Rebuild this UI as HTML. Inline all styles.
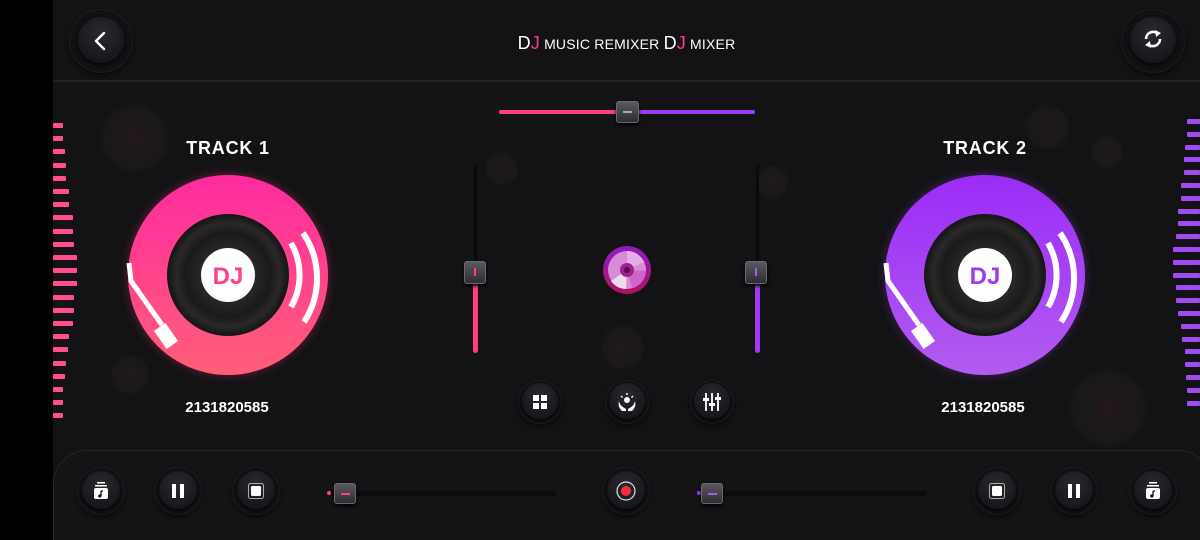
<!DOCTYPE html>
<html style="width:1200px;height:540px;overflow:hidden"><head><meta charset="utf-8"><style>
*{margin:0;padding:0;box-sizing:border-box}
body{width:1200px;height:540px;overflow:hidden;background:#131214;font-family:"Liberation Sans",sans-serif;position:relative}
.abs{position:absolute}
.strip{left:0;top:0;width:53px;height:540px;background:#000}
.hline{left:53px;top:80px;width:1147px;height:2px;background:#242326}
.panel{left:53px;top:450px;width:1160px;height:90px;border-top:1.5px solid #262528;border-left:1.5px solid #262528;border-right:1.5px solid #262528;border-radius:34px 34px 0 0;background:#141315}
.btn{border-radius:50%;background:#111012;box-shadow:0 0 0 1px #1d1c1f, 0 3px 6px rgba(0,0,0,.6)}
.btn .in{position:absolute;border-radius:50%;background:radial-gradient(circle at 50% 35%,#2a292d,#17161a 75%);box-shadow:0 2px 3px rgba(0,0,0,.7)}
.title{left:0;width:1253px;top:33px;text-align:center;color:#fff;font-size:14px;letter-spacing:.2px}
.title b{font-weight:normal;font-size:18px}
.title i{font-style:normal;color:#ff3d8f;font-size:18px}
.lbl{color:#fff;font-size:18px;font-weight:bold;letter-spacing:.8px;text-align:center;width:200px}
.num{color:#fff;font-size:15px;font-weight:bold;text-align:center;width:200px}
.bar{height:5px;border-radius:1px}
.knob{border-radius:3px;background:linear-gradient(#5a595e,#2e2d31);border:1px solid #6a696d;box-shadow:0 2px 3px #000}
.ghost{border-radius:50%;background:radial-gradient(circle,#2a1a20 8%,#211c20 25%,#1e1b1e 60%,rgba(30,25,28,0) 72%);opacity:.7}
</style></head><body>
<div class="abs strip"></div>
<div class="abs hline"></div>

<div class="abs ghost" style="left:100px;top:103px;width:70px;height:70px"></div>
<div class="abs ghost" style="left:110px;top:355px;width:40px;height:40px"></div>
<div class="abs ghost" style="left:485px;top:152px;width:34px;height:34px"></div>
<div class="abs ghost" style="left:600px;top:325px;width:45px;height:45px"></div>
<div class="abs ghost" style="left:755px;top:165px;width:34px;height:34px"></div>
<div class="abs ghost" style="left:1025px;top:105px;width:45px;height:45px"></div>
<div class="abs ghost" style="left:1090px;top:135px;width:34px;height:34px"></div>
<div class="abs ghost" style="left:1068px;top:368px;width:80px;height:80px"></div>

<div class="abs btn" style="left:70px;top:10px;width:62px;height:62px"><div class="in" style="left:8px;top:7px;width:46px;height:46px"></div>
<svg class="abs" style="left:20px;top:20px" width="22" height="22" viewBox="0 0 22 22"><path d="M14 3 L6 11 L14 19" fill="none" stroke="#fff" stroke-width="2.4" stroke-linecap="round" stroke-linejoin="round"/></svg></div>
<div class="abs btn" style="left:1122px;top:10px;width:62px;height:62px"><div class="in" style="left:8px;top:7px;width:46px;height:46px"></div>
<svg class="abs" style="left:19px;top:17px" width="24" height="24" viewBox="0 0 24 24"><path d="M5 12 A7 7 0 0 1 17 7" fill="none" stroke="#fff" stroke-width="2.6"/><path d="M19 12 A7 7 0 0 1 7 17" fill="none" stroke="#fff" stroke-width="2.6"/><path d="M14 3 L20 6 L15 10Z M10 21 L4 18 L9 14Z" fill="#fff"/></svg></div>

<div class="abs title"><b>D</b><i>J</i> MUSIC REMIXER <b>D</b><i>J</i> MIXER</div>

<div id="lb"></div>

<div class="abs lbl" style="left:128px;top:138px">TRACK 1</div>
<div class="abs lbl" style="left:885px;top:138px">TRACK 2</div>
<div class="abs num" style="left:127px;top:399px">2131820585</div>
<div class="abs num" style="left:883px;top:399px">2131820585</div>

<svg class="abs" style="left:108px;top:155px" width="240" height="240" viewBox="-20 -20 240 240">
<defs><linearGradient id="gp" x1="0" y1="0" x2="0" y2="1"><stop offset="0" stop-color="#ff2aa0"/><stop offset="1" stop-color="#ff5e78"/></linearGradient>
<radialGradient id="vn"><stop offset=".4" stop-color="#2a2829"/><stop offset=".7" stop-color="#1b1a1b"/><stop offset=".85" stop-color="#2a2829"/><stop offset="1" stop-color="#151414"/></radialGradient>
<filter id="gl" x="-30%" y="-30%" width="160%" height="160%"><feGaussianBlur stdDeviation="5"/></filter></defs>
<circle cx="100" cy="100" r="100" fill="#ff3b8a" opacity=".35" filter="url(#gl)"/>
<circle cx="100" cy="100" r="100" fill="url(#gp)"/>
<circle cx="100" cy="100" r="61" fill="url(#vn)"/>
<circle cx="100" cy="100" r="27" fill="#fff"/>
<text x="100" y="109" text-anchor="middle" font-family="Liberation Sans" font-weight="bold" font-size="24" fill="#ff3d8f">DJ</text>
<path d="M163 68 A64 64 0 0 1 163 132" fill="none" stroke="#fff" stroke-width="6"/>
<path d="M175 58 A80 80 0 0 1 176 147" fill="none" stroke="#fff" stroke-width="6"/>
<path d="M1 88 L3 106 L34 150" fill="none" stroke="#fff" stroke-width="5"/>
<rect x="31" y="150" width="14" height="22" fill="#fff" transform="rotate(-35 38 161)"/>
</svg>
<svg class="abs" style="left:865px;top:155px" width="240" height="240" viewBox="-20 -20 240 240">
<defs><linearGradient id="gq" x1="0" y1="0" x2="0" y2="1"><stop offset="0" stop-color="#9b2cf6"/><stop offset="1" stop-color="#b25cf2"/></linearGradient></defs>
<circle cx="100" cy="100" r="100" fill="#9b3cf0" opacity=".35" filter="url(#gl)"/>
<circle cx="100" cy="100" r="100" fill="url(#gq)"/>
<circle cx="100" cy="100" r="61" fill="url(#vn)"/>
<circle cx="100" cy="100" r="27" fill="#fff"/>
<text x="100" y="109" text-anchor="middle" font-family="Liberation Sans" font-weight="bold" font-size="24" fill="#9b3cf0">DJ</text>
<path d="M163 68 A64 64 0 0 1 163 132" fill="none" stroke="#fff" stroke-width="6"/>
<path d="M175 58 A80 80 0 0 1 176 147" fill="none" stroke="#fff" stroke-width="6"/>
<path d="M1 88 L3 106 L34 150" fill="none" stroke="#fff" stroke-width="5"/>
<rect x="31" y="150" width="14" height="22" fill="#fff" transform="rotate(-35 38 161)"/>
</svg>

<div class="abs" style="left:499px;top:110px;width:128px;height:4px;border-radius:2px;background:#ff3f82"></div>
<div class="abs" style="left:627px;top:110px;width:128px;height:4px;border-radius:2px;background:#9b3cf0"></div>
<div class="abs knob" style="left:616px;top:101px;width:23px;height:22px"><div class="abs" style="left:6px;top:9px;width:9px;height:2px;background:#aaa"></div></div>

<div class="abs" style="left:474px;top:165px;width:3px;height:110px;background:#0a0a0b"></div>
<div class="abs" style="left:473px;top:275px;width:5px;height:78px;border-radius:3px;background:#ff3f82"></div>
<div class="abs knob" style="left:464px;top:261px;width:22px;height:23px"><div class="abs" style="left:9px;top:6px;width:2px;height:8px;background:#ff3f82"></div></div>
<div class="abs" style="left:756px;top:165px;width:3px;height:110px;background:#0a0a0b"></div>
<div class="abs" style="left:755px;top:275px;width:5px;height:78px;border-radius:3px;background:#9b3cf0"></div>
<div class="abs knob" style="left:745px;top:261px;width:22px;height:23px"><div class="abs" style="left:9px;top:6px;width:2px;height:8px;background:#a35cf0"></div></div>

<svg class="abs" style="left:602px;top:245px" width="50" height="50" viewBox="0 0 50 50">
<defs><linearGradient id="cr" x1="0" y1="0" x2="0" y2="1"><stop offset="0" stop-color="#8a1fc4"/><stop offset="1" stop-color="#b0125e"/></linearGradient></defs>
<circle cx="25" cy="25" r="24" fill="url(#cr)"/>
<circle cx="25" cy="25" r="19" fill="#d98ad9"/>
<path d="M25 25 L25 6 A19 19 0 0 1 42 17Z" fill="#e6aee6"/>
<path d="M25 25 L9 36 A19 19 0 0 0 24 44Z" fill="#eadde8"/>
<path d="M25 25 L44 26 A19 19 0 0 1 30 43Z" fill="#cc66c8"/>
<circle cx="25" cy="25" r="7" fill="#a0208f"/>
<circle cx="25" cy="25" r="3" fill="#5a0a50"/>
</svg>

<div class="abs btn" style="left:519px;top:381px;width:42px;height:42px"><div class="in" style="left:3px;top:2px;width:36px;height:36px"></div>
<svg class="abs" style="left:13px;top:13px" width="16" height="16"><rect x="1" y="1" width="6" height="6" fill="#fff"/><rect x="9" y="1" width="6" height="6" fill="#fff"/><rect x="1" y="9" width="6" height="6" fill="#fff"/><rect x="9" y="9" width="6" height="6" fill="#fff"/></svg></div>
<div class="abs btn" style="left:606px;top:381px;width:42px;height:42px"><div class="in" style="left:3px;top:2px;width:36px;height:36px"></div>
<svg class="abs" style="left:11px;top:11px" width="20" height="20" viewBox="0 0 20 20"><circle cx="10" cy="8" r="3" fill="#fff"/><path d="M10 1v2M4 4l1.5 1.5M16 4l-1.5 1.5" stroke="#fff" stroke-width="1.4"/><path d="M2 9 C3 14 6 15 9 17 L9 19 L5 19 C2 16 1 13 2 9Z M18 9 C17 14 14 15 11 17 L11 19 L15 19 C18 16 19 13 18 9Z" fill="#fff"/></svg></div>
<div class="abs btn" style="left:691px;top:381px;width:42px;height:42px"><div class="in" style="left:3px;top:2px;width:36px;height:36px"></div>
<svg class="abs" style="left:12px;top:11px" width="18" height="20" viewBox="0 0 18 20"><path d="M3 1v18M9 1v18M15 1v18" stroke="#fff" stroke-width="1.8"/><rect x="0" y="6" width="6" height="3" fill="#fff"/><rect x="6" y="11" width="6" height="3" fill="#fff"/><rect x="12" y="5" width="6" height="3" fill="#fff"/></svg></div>

<div class="abs panel"></div>
<div id="bb"></div>

<div class="abs" style="left:330px;top:491px;width:226px;height:5px;background:#0b0a0c;border-radius:2px"></div>
<div class="abs" style="left:327px;top:491px;width:4px;height:4px;border-radius:50%;background:#ff3f82"></div>
<div class="abs knob" style="left:334px;top:483px;width:22px;height:21px"><div class="abs" style="left:6px;top:9px;width:9px;height:2px;background:#ff3f82"></div></div>
<div class="abs" style="left:700px;top:491px;width:226px;height:5px;background:#0b0a0c;border-radius:2px"></div>
<div class="abs" style="left:697px;top:491px;width:4px;height:4px;border-radius:50%;background:#9b3cf0"></div>
<div class="abs knob" style="left:701px;top:483px;width:22px;height:21px"><div class="abs" style="left:6px;top:9px;width:9px;height:2px;background:#a35cf0"></div></div>

<script>
var w=[10,10,12,13,13,16,16,20,20,21,24,24,24,21,21,20,16,15,13,12,10,10,10];
var wr=[13,13,15,16,16,19,19,22,22,24,27,27,27,24,24,22,19,18,15,15,14,13,13];
var h='';
for(var i=0;i<23;i++){
h+='<div class="abs bar" style="left:53px;top:'+(123+i*13.2)+'px;width:'+w[i]+'px;background:#ff4d8d"></div>';
h+='<div class="abs bar" style="left:'+(1200-wr[i])+'px;top:'+(119+i*12.8)+'px;width:'+wr[i]+'px;background:#a04cf0"></div>';
}
document.getElementById('lb').innerHTML=h;
function btn(cx,ic){return '<div class="abs btn" style="left:'+(cx-23)+'px;top:468px;width:46px;height:46px"><div class="in" style="left:4px;top:3px;width:38px;height:38px"></div>'+ic+'</div>';}
var pause='<svg class="abs" style="left:16px;top:16px" width="14" height="14"><rect x="1" y="0" width="4" height="14" fill="#fff"/><rect x="9" y="0" width="4" height="14" fill="#fff"/></svg>';
var stop='<svg class="abs" style="left:15px;top:15px" width="16" height="16"><rect x=".5" y=".5" width="15" height="15" rx="2" fill="none" stroke="#aaa"/><rect x="3" y="3" width="10" height="10" rx="1.5" fill="#fff"/></svg>';
var lib='<svg class="abs" style="left:15px;top:14px" width="16" height="18" viewBox="0 0 16 18"><rect x="4" y="0" width="8" height="1.5" fill="#fff"/><rect x="2" y="3" width="12" height="1.5" fill="#fff"/><rect x="1" y="6" width="14" height="11" rx="2" fill="#fff"/><path d="M8 9v5" stroke="#111" stroke-width="1.3"/><circle cx="6.8" cy="14" r="1.6" fill="#111"/><path d="M8 9h2" stroke="#111" stroke-width="1.3"/></svg>';
var rec='<svg class="abs" style="left:13px;top:13px" width="20" height="20"><circle cx="10" cy="10" r="9" fill="none" stroke="#ddd" stroke-width="1.2"/><circle cx="10" cy="10" r="5" fill="#ff2a3a"/></svg>';
document.getElementById('bb').innerHTML=btn(101,lib)+btn(178,pause)+btn(256,stop)+btn(626,rec)+btn(997,stop)+btn(1074,pause)+btn(1153,lib);
</script>
</body></html>
